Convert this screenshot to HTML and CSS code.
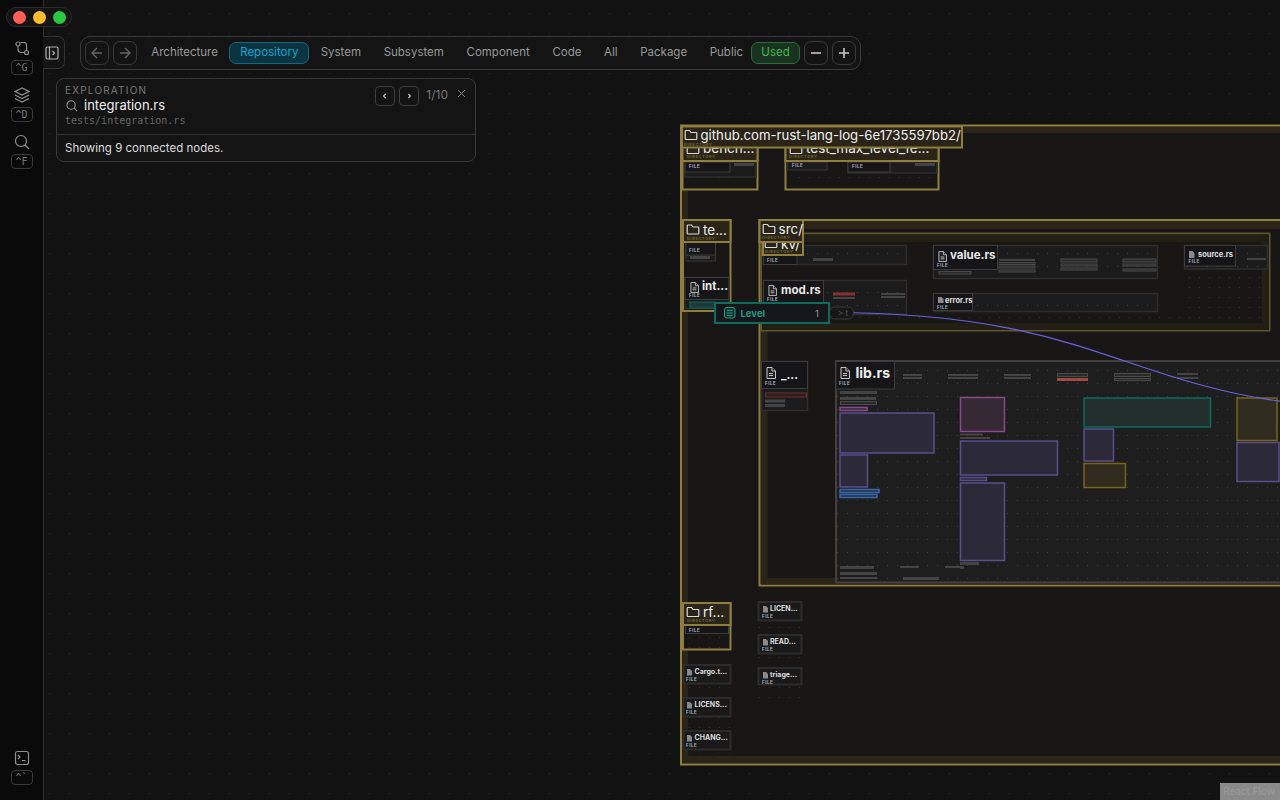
FILE: index.html
```html
<!DOCTYPE html>
<html lang="en">
<head>
  <meta charset="UTF-8">
  <meta name="viewport" content="width=device-width, initial-scale=1.0">
  <title>Code graph - integration.rs</title>
  <link rel="stylesheet" href="styles.css">
</head>
<body>
  <div class="app">
    <svg class="flow" viewBox="0 0 1280 800" width="1280" height="800">
      <defs>
        <pattern id="dots" width="20" height="20" patternUnits="userSpaceOnUse" x="-1" y="3">
          <rect x="10" y="10" width="1" height="1" class="dot"></rect>
        </pattern>
        <pattern id="node-dots" width="10" height="13" patternUnits="userSpaceOnUse" x="2" y="1">
          <rect x="5" y="5" width="1" height="1" class="node-dot"></rect>
        </pattern>
        <pattern id="small-dots" width="10" height="10" patternUnits="userSpaceOnUse" x="4" y="2">
          <rect x="5" y="5" width="1" height="1" class="small-dot"></rect>
        </pattern>
        <symbol id="folder-sym" viewBox="0 0 12 10" overflow="visible">
          <path d="M1 .5h3.500l1.500 2h5a.8.8 0 0 1 .8.8v5.400a.8.8 0 0 1-.8.8h-10a.8.8 0 0 1-.8-.8v-7.400a.8.8 0 0 1 .8-.8z"></path>
        </symbol>
        <symbol id="file-sym" viewBox="0 0 10 12">
          <path d="M1 .5h5l3.500 3.500v7.500h-8.500z"></path>
          <path d="M6 .5v3.500h3.500M3 6.500h4M3 8.500h4"></path>
        </symbol>
      </defs>
      <rect width="1280" height="800" fill="#121212"></rect>
      <rect width="1280" height="800" fill="url(#dots)"></rect>

      <!-- repository group -->
      <rect class="group" x="681" y="125.500" width="700" height="639"></rect>
      <rect class="band" x="682" y="127" width="700" height="6"></rect>
      <rect class="band" x="682" y="127" width="6" height="636"></rect>
      <rect class="band" x="682" y="756" width="700" height="7"></rect>

      <!-- benches -->
      <rect class="group" x="682.500" y="131" width="75" height="58.500"></rect>
      <rect class="file" x="685" y="162" width="71" height="15"></rect>
      <rect class="dotted-s" x="685" y="175" width="71" height="12"></rect>
      <rect class="head-line" x="685" y="162" width="45" height="10"></rect>
      <rect class="bar" x="734" y="163" width="20" height="3"></rect>
      <text class="label-file" x="689" y="167.500">FILE</text>
      <rect class="group" x="785.500" y="131" width="153" height="58.500"></rect>
      <rect class="file" x="787" y="162" width="40" height="8"></rect>
      <rect class="file" x="848" y="162" width="89" height="11"></rect>
      <rect class="dotted-s" x="790" y="175" width="145" height="12"></rect>
      <rect class="head-line" x="848" y="162" width="42" height="10"></rect>
      <rect class="bar" x="915" y="163" width="20" height="3"></rect>
      <text class="label-file" x="792" y="166.500">FILE</text>
      <text class="label-file" x="852" y="167.500">FILE</text>
      <rect class="group-head" x="682.500" y="131" width="75" height="30"></rect>
      <use href="#folder-sym" class="folder" x="687" y="144" width="12" height="10"></use>
      <text class="title-dir" x="703" y="153">bench...</text>
      <text class="label-dir" x="687" y="158">DIRECTORY</text>
      <rect class="group-head" x="785.500" y="131" width="153" height="30"></rect>
      <use href="#folder-sym" class="folder" x="790" y="144" width="12" height="10"></use>
      <text class="title-dir" x="806" y="153">test_max_level_fe...</text>
      <text class="label-dir" x="789" y="158">DIRECTORY</text>

      <!-- repository header sits over the clipped benches -->
      <rect class="group-head" x="682" y="126.500" width="280" height="21"></rect>
      <use href="#folder-sym" class="folder" x="685" y="130" width="12" height="10"></use>
      <text class="title-repo" x="700.500" y="140">github.com-rust-lang-log-6e1735597bb2/</text>
      <text class="label-dir" x="684" y="146">DIRECTORY</text>

      <!-- tests -->
      <rect class="group" x="683" y="220" width="47.500" height="91"></rect>
      <rect class="file" x="686" y="240" width="29.500" height="21"></rect>
      <rect class="head-line" x="686" y="240" width="29.500" height="15"></rect>
      <rect class="bar" x="690" y="256" width="20" height="3"></rect>
      <text class="label-file" x="689" y="251.500">FILE</text>
      <rect class="file" x="685" y="277.500" width="44" height="31"></rect>
      <rect class="head-line" x="685" y="277.500" width="44" height="22"></rect>
      <use href="#file-sym" class="file-icon" x="690" y="282" width="9" height="11"></use>
      <text class="title-file" x="702" y="290">int...</text>
      <text class="label-file" x="689" y="297">FILE</text>
      <rect class="teal-bar" x="690" y="302" width="25" height="6"></rect>
      <rect class="group-head" x="683" y="220" width="47.500" height="22"></rect>
      <use href="#folder-sym" class="folder" x="687" y="224.500" width="12" height="10"></use>
      <text class="title-dir" x="703" y="234.500">te...</text>
      <text class="label-dir" x="687" y="239.500">DIRECTORY</text>

      <!-- src -->
      <rect class="group" x="759.500" y="220" width="620" height="365.500"></rect>
      <rect class="band" x="761" y="221" width="620" height="8"></rect>
      <rect class="band" x="761" y="221" width="6.500" height="363"></rect>
      <rect class="band" x="761" y="578" width="620" height="6.500"></rect>

      <!-- kv -->
      <rect class="group-soft" x="761" y="233.500" width="508.500" height="97"></rect>
      <rect class="band-soft" x="762" y="234.500" width="507" height="7.500"></rect>
      <rect class="band-soft" x="762" y="323" width="507" height="7"></rect>
      <rect class="band-soft" x="1262" y="234.500" width="7" height="95"></rect>
      <rect class="file" x="763.500" y="245.500" width="143" height="19"></rect>
      <rect class="dotted" x="764" y="246" width="142" height="18"></rect>
      <rect class="head-line" x="763.500" y="245.500" width="33.500" height="19"></rect>
      <rect class="bar" x="813" y="258" width="20" height="3"></rect>
      <text class="label-file" x="767" y="261.500">FILE</text>
      <rect class="file" x="763.500" y="280.500" width="143" height="34"></rect>
      <rect class="dotted" x="764" y="281" width="142" height="33"></rect>
      <rect class="head-line" x="763.500" y="280.500" width="60" height="23"></rect>
      <use href="#file-sym" class="file-icon" x="768" y="285" width="9" height="11"></use>
      <text class="title-file" x="781" y="294">mod.rs</text>
      <text class="label-file" x="767" y="301">FILE</text>
      <rect class="bar-red" x="833.500" y="293" width="21" height="2"></rect>
      <rect class="bar" x="881" y="293" width="24" height="2"></rect>
      <rect class="bar" x="881" y="296" width="24" height="2"></rect>
      <rect class="bar" x="833" y="297" width="22" height="2"></rect>

      <rect class="file" x="933.500" y="245.500" width="224" height="33"></rect>
      <rect class="dotted" x="934" y="246" width="223" height="32"></rect>
      <rect class="head-line" x="933.500" y="245.500" width="64" height="24"></rect>
      <use href="#file-sym" class="file-icon" x="938" y="251" width="9" height="11"></use>
      <text class="title-file" x="950" y="259">value.rs</text>
      <text class="label-file" x="937" y="267">FILE</text>
      <rect class="bar-line" x="939" y="271.500" width="32" height="2.500"></rect>
      <rect class="bar" x="999" y="259" width="36" height="2"></rect>
      <rect class="bar-line" x="999" y="262.500" width="36" height="2"></rect>
      <rect class="bar-line" x="999" y="266" width="36" height="2"></rect>
      <rect class="bar-line" x="999" y="270" width="36" height="2"></rect>
      <rect class="bar-line" x="1061" y="259" width="36" height="3"></rect>
      <rect class="bar-line" x="1061" y="264" width="36" height="2"></rect>
      <rect class="bar-line" x="1061" y="268" width="36" height="2"></rect>
      <rect class="bar-line" x="1123" y="259" width="33" height="3"></rect>
      <rect class="bar-line" x="1123" y="264" width="33" height="2"></rect>
      <rect class="bar-line" x="1123" y="269" width="33" height="2"></rect>

      <rect class="file" x="933.500" y="293.500" width="224" height="18"></rect>
      <rect class="dotted" x="934" y="294" width="223" height="17"></rect>
      <rect class="head-line" x="933.500" y="293.500" width="39" height="17"></rect>
      <path class="file-solid" d="M938 297h3.500l2 2v4h-5.500z"></path>
      <text class="title-file-s" x="945" y="303">error.rs</text>
      <text class="label-file" x="937" y="309">FILE</text>

      <rect class="file" x="1184.500" y="245.500" width="83" height="23.500"></rect>
      <rect class="dotted" x="1185" y="246" width="82" height="23"></rect>
      <rect class="head-line" x="1184.500" y="245.500" width="51" height="20.500"></rect>
      <path class="file-solid" d="M1189 251h3.500l2 2v5h-5.500z"></path>
      <text class="title-file-s" x="1198" y="256.500">source.rs</text>
      <text class="label-file" x="1188.500" y="262.500">FILE</text>
      <rect class="bar" x="1247" y="258" width="19" height="2"></rect>
      <rect class="small-dotted" x="1185" y="270" width="78" height="50"></rect>
      <rect class="small-dotted" x="764" y="315" width="498" height="8"></rect>

      <rect class="group-head" x="763" y="235" width="40" height="20"></rect>
      <use href="#folder-sym" class="folder" x="765" y="238" width="12" height="10"></use>
      <text class="title-dir" x="781" y="248.500">kv/</text>
      <text class="label-dir" x="765" y="252.500">DIRECTORY</text>

      <rect class="group-head" x="759.500" y="220" width="43.500" height="22"></rect>
      <use href="#folder-sym" class="folder" x="763" y="224" width="12" height="10"></use>
      <text class="title-dir" x="778.500" y="234">src/</text>
      <text class="label-dir" x="762" y="239">DIRECTORY</text>

      <!-- underscore file -->
      <rect class="file" x="761.500" y="361.500" width="46" height="49"></rect>
      <rect class="head-line" x="761.500" y="361.500" width="46" height="27"></rect>
      <use href="#file-sym" class="file-icon" x="766" y="367" width="10" height="12"></use>
      <text class="title-file" x="781" y="379">_...</text>
      <text class="label-file" x="765" y="385">FILE</text>
      <rect class="bar-red-line" x="765.500" y="393" width="41" height="4"></rect>
      <rect class="bar" x="765" y="399.500" width="20" height="3"></rect>
      <rect class="bar" x="765" y="404" width="20" height="3"></rect>

      <!-- lib.rs -->
      <rect class="lib" x="836" y="361" width="545" height="221.500"></rect>
      <rect class="lib-dots" x="837" y="362" width="443" height="220"></rect>
      <rect class="head-line" x="836" y="361.500" width="58.500" height="27.500"></rect>
      <use href="#file-sym" class="file-icon" x="840" y="367" width="10" height="12"></use>
      <text class="title-lib" x="855.500" y="378">lib.rs</text>
      <text class="label-file" x="839" y="385">FILE</text>

      <rect class="bar" x="903" y="374" width="19" height="2"></rect>
      <rect class="bar" x="903" y="377" width="19" height="2"></rect>
      <rect class="bar" x="948" y="374" width="30" height="2"></rect>
      <rect class="bar" x="948" y="377" width="30" height="2"></rect>
      <rect class="bar" x="1004" y="374" width="27" height="2"></rect>
      <rect class="bar" x="1004" y="377" width="27" height="2"></rect>
      <rect class="bar-line" x="1057.500" y="373.500" width="30" height="3"></rect>
      <rect class="bar-red-solid" x="1057" y="378" width="31" height="3"></rect>
      <rect class="bar-line" x="1114.500" y="373.500" width="36" height="3"></rect>
      <rect class="bar-line" x="1114.500" y="378.500" width="36" height="2"></rect>
      <rect class="bar" x="1177" y="373" width="21" height="2"></rect>
      <rect class="bar" x="1177" y="377" width="21" height="2"></rect>

      <rect class="bar" x="840" y="391" width="37" height="3"></rect>
      <rect class="bar" x="840" y="397" width="36" height="3"></rect>
      <rect class="bar-line" x="840.500" y="401.500" width="36" height="3"></rect>
      <rect class="box-magenta" x="840" y="407.500" width="27" height="3"></rect>
      <rect class="box-purple" x="840" y="413" width="94" height="40"></rect>
      <rect class="box-purple" x="840" y="455" width="27.500" height="32"></rect>
      <rect class="box-blue" x="840" y="489.500" width="39" height="3"></rect>
      <rect class="box-blue" x="840" y="494.500" width="37" height="3"></rect>

      <rect class="box-magenta" x="960.500" y="397.500" width="44" height="34"></rect>
      <rect class="bar" x="960" y="433.500" width="23" height="2"></rect>
      <rect class="bar" x="960" y="437" width="30" height="2"></rect>
      <rect class="box-purple" x="960.500" y="441" width="97" height="34"></rect>
      <rect class="box-purple" x="960.500" y="477.500" width="26" height="3"></rect>
      <rect class="box-purple" x="960.500" y="483" width="44" height="77.500"></rect>
      <rect class="bar" x="960" y="562" width="19" height="3"></rect>
      <rect class="bar" x="960" y="567" width="4" height="2"></rect>

      <rect class="box-teal" x="1084" y="398" width="126.500" height="29"></rect>
      <rect class="box-purple" x="1084" y="429" width="29.500" height="32"></rect>
      <rect class="box-olive" x="1084" y="463.500" width="41.500" height="24"></rect>
      <rect class="box-olive" x="1237" y="398" width="40" height="42.500"></rect>
      <rect class="box-purple" x="1237" y="442.500" width="42" height="39"></rect>

      <rect class="bar" x="840" y="566" width="34" height="3"></rect>
      <rect class="bar" x="840" y="572" width="37" height="3"></rect>
      <rect class="bar" x="840" y="577" width="37" height="2"></rect>
      <rect class="bar" x="900" y="566" width="19" height="2"></rect>
      <rect class="bar" x="945" y="566" width="19" height="2"></rect>
      <rect class="bar" x="903" y="577" width="36" height="3"></rect>

      <!-- rfcs and loose files -->
      <rect class="group" x="683" y="603" width="47.500" height="46.500"></rect>
      <rect class="small-dotted" x="686" y="632" width="42" height="16"></rect>
      <rect class="head-line" x="685.500" y="625.500" width="43" height="8"></rect>
      <text class="label-file" x="689" y="631.500">FILE</text>
      <rect class="group-head" x="683" y="603" width="47.500" height="22"></rect>
      <use href="#folder-sym" class="folder" x="687" y="607" width="12" height="10"></use>
      <text class="title-dir" x="703" y="616.500">rf...</text>
      <text class="label-dir" x="687" y="622">DIRECTORY</text>

      <rect class="file-dark" x="683.500" y="665" width="47" height="18.500"></rect>
      <path class="file-solid" d="M687 669h3l2 2v4.500h-5z"></path>
      <text class="title-xs" x="694.500" y="674">Cargo.t...</text>
      <text class="label-file" x="686" y="681">FILE</text>
      <rect class="small-dotted" x="684" y="684" width="46" height="13"></rect>
      <rect class="file-dark" x="683.500" y="698" width="47" height="18.500"></rect>
      <path class="file-solid" d="M687 702h3l2 2v4.500h-5z"></path>
      <text class="title-xs" x="694.500" y="707">LICENS...</text>
      <text class="label-file" x="686" y="714">FILE</text>
      <rect class="small-dotted" x="684" y="717" width="46" height="13"></rect>
      <rect class="file-dark" x="683.500" y="731" width="47" height="18.500"></rect>
      <path class="file-solid" d="M687 735h3l2 2v4.500h-5z"></path>
      <text class="title-xs" x="694.500" y="740">CHANG...</text>
      <text class="label-file" x="686" y="747">FILE</text>
      <rect class="small-dotted" x="684" y="750" width="46" height="14"></rect>

      <rect class="file-dark" x="758.500" y="602" width="43" height="18.500"></rect>
      <path class="file-solid" d="M763 606h3l2 2v4.500h-5z"></path>
      <text class="title-xs" x="770" y="611">LICEN...</text>
      <text class="label-file" x="762" y="618">FILE</text>
      <rect class="small-dotted" x="759" y="621" width="42" height="13"></rect>
      <rect class="file-dark" x="758.500" y="635" width="43" height="18.500"></rect>
      <path class="file-solid" d="M763 639h3l2 2v4.500h-5z"></path>
      <text class="title-xs" x="770" y="644">READ...</text>
      <text class="label-file" x="762" y="651">FILE</text>
      <rect class="small-dotted" x="759" y="654" width="42" height="13"></rect>
      <rect class="file-dark" x="758.500" y="668" width="43" height="16.500"></rect>
      <path class="file-solid" d="M763 672h3l2 2v4.500h-5z"></path>
      <text class="title-xs" x="770" y="677">triage...</text>
      <text class="label-file" x="762" y="684">FILE</text>
      <rect class="small-dotted" x="759" y="686" width="42" height="14"></rect>

      <!-- highlighted symbol and its edge -->
      <path class="edge" d="M829 312.500 C 1127 312.500, 1127 409, 1401 409"></path>
      <rect class="handle" x="829.500" y="307" width="24" height="12" rx="5"></rect>
      <text class="handle-text" x="838" y="316">&gt; t</text>
      <rect class="symbol" x="715" y="303" width="114" height="20"></rect>
      <rect class="symbol-icon" x="724.500" y="307.500" width="10.500" height="10.500" rx="2"></rect>
      <path class="symbol-lines" d="M727 310.500h5.500M727 313h5.500M727 315.500h5.500"></path>
      <text class="symbol-name" x="740.500" y="316.500">Level</text>
      <text class="symbol-count" x="815" y="316.500">1</text>
    </svg>

    <aside class="sidebar">
      <div class="side-group">
        <svg class="side-icon" viewBox="0 0 16 16">
          <circle cx="4" cy="4" r="2"></circle>
          <circle cx="12.500" cy="12.500" r="2"></circle>
          <path d="M4 6v3.500a3 3 0 0 0 3 3h3.500M6.500 2.500h3.500a2.500 2.500 0 0 1 2.500 2.500v5.500"></path>
        </svg>
        <kbd class="key">^G</kbd>
      </div>
      <div class="side-group">
        <svg class="side-icon" viewBox="0 0 16 16">
          <path d="M8 1 1 4.500 8 8l7-3.500zM1 8l7 3.500L15 8M1 11.500 8 15l7-3.500"></path>
        </svg>
        <kbd class="key">^D</kbd>
      </div>
      <div class="side-group">
        <svg class="side-icon" viewBox="0 0 16 16">
          <circle cx="7" cy="7" r="5.500"></circle>
          <path d="m11 11 4 4"></path>
        </svg>
        <kbd class="key">^F</kbd>
      </div>
      <div class="side-group side-bottom">
        <svg class="side-icon" viewBox="0 0 16 16">
          <rect x="1.500" y="1.500" width="13" height="13" rx="2"></rect>
          <path d="m4 5 2 2-2 2M8 10.500h3.500"></path>
        </svg>
        <kbd class="key">^`</kbd>
      </div>
    </aside>

    <div class="lights">
      <span class="light red"></span>
      <span class="light yellow"></span>
      <span class="light green"></span>
    </div>

    <button class="panel-toggle">
      <svg viewBox="0 0 14 14">
        <rect x="1" y="1" width="12" height="12" rx="1.500"></rect>
        <path d="M4.500 1v12M7.500 5l2 2-2 2"></path>
      </svg>
    </button>

    <nav class="toolbar">
      <button class="nav-btn">
        <svg viewBox="0 0 14 14"><path d="M12 7H2M7 2 2 7l5 5"></path></svg>
      </button>
      <button class="nav-btn">
        <svg viewBox="0 0 14 14"><path d="M2 7h10M7 2l5 5-5 5"></path></svg>
      </button>
      <div class="tabs">
        <a class="tab">Architecture</a>
        <a class="tab active">Repository</a>
        <a class="tab">System</a>
        <a class="tab">Subsystem</a>
        <a class="tab">Component</a>
        <a class="tab">Code</a>
        <a class="tab">All</a>
        <a class="tab">Package</a>
        <a class="tab">Public</a>
        <a class="tab used">Used</a>
      </div>
      <button class="zoom-btn">
        <svg viewBox="0 0 12 12"><path d="M1 6h10"></path></svg>
      </button>
      <button class="zoom-btn">
        <svg viewBox="0 0 12 12"><path d="M1 6h10M6 1v10"></path></svg>
      </button>
    </nav>

    <section class="exploration">
      <div class="exp-head">
        <div class="exp-info">
          <div class="exp-title">EXPLORATION</div>
          <div class="exp-name">
            <svg viewBox="0 0 14 14">
              <circle cx="6.500" cy="6.500" r="4.500"></circle>
              <path d="m10 10 3 3"></path>
            </svg>
            integration.rs
          </div>
          <div class="exp-path">tests/integration.rs</div>
        </div>
        <div class="exp-pager">
          <button class="page-btn">
            <svg viewBox="0 0 6 6"><path d="M3.500 1.500 2 3l1.500 1.500"></path></svg>
          </button>
          <button class="page-btn">
            <svg viewBox="0 0 6 6"><path d="M2.500 1.500 4 3 2.500 4.500"></path></svg>
          </button>
          <span class="page-count">1/10</span>
          <svg class="page-close" viewBox="0 0 8 8"><path d="m1 1 6 6M7 1 1 7"></path></svg>
        </div>
      </div>
      <div class="exp-foot">Showing 9 connected nodes.</div>
    </section>

    <div class="attribution">React Flow</div>
  </div>
</body>
</html>
```

FILE: styles.css
```css
* {
  box-sizing: border-box;
}

body {
  margin: 0;
  background: #121212;
  font-family: Inter, "Noto Sans", sans-serif;
  color: #ddd;
  overflow: hidden;
}

.app {
  position: relative;
  width: 1280px;
  height: 800px;
  overflow: hidden;
}

.flow {
  position: absolute;
  inset: 0;
  display: block;
}

/* sidebar */
.sidebar {
  position: relative;
  width: 44px;
  height: 800px;
  background: #0a0a0a;
  border-right: 1px solid #2e2e2e;
  display: flex;
  flex-direction: column;
  align-items: center;
  padding-top: 40px;
  gap: 12px;
}

.side-group {
  display: flex;
  flex-direction: column;
  align-items: center;
  gap: 4px;
}

.side-bottom {
  margin-top: auto;
  margin-bottom: 15px;
}

.side-icon {
  width: 16px;
  height: 16px;
  fill: none;
  stroke: #8f8f8f;
  stroke-width: 1.200;
}

.key {
  width: 22px;
  height: 15px;
  border: 1px solid #3a3a3a;
  border-radius: 4px;
  font-family: "DejaVu Sans Mono", monospace;
  font-size: 10px;
  line-height: 13px;
  text-align: center;
  color: #777;
}

/* window controls */
.lights {
  position: absolute;
  left: 6px;
  top: 7px;
  width: 66px;
  height: 20px;
  padding-left: 1px;
  background: #141414;
  border: 1px solid #2c2c2c;
  border-radius: 10px;
  display: flex;
  align-items: center;
  justify-content: center;
  gap: 7px;
}

.light {
  width: 13px;
  height: 13px;
  border-radius: 50%;
}

.red { background: #ff5f57; }
.yellow { background: #febc2e; }
.green { background: #28c840; }

.panel-toggle {
  position: absolute;
  left: 43px;
  top: 36px;
  width: 22px;
  height: 33px;
  padding: 0 0 0 2px;
  background: #141414;
  border: 1px solid #333;
  border-left: none;
  border-radius: 0 7px 7px 0;
  display: flex;
  align-items: center;
}

.panel-toggle svg {
  width: 14px;
  height: 14px;
  fill: none;
  stroke: #b0b0b0;
  stroke-width: 1.200;
}

/* toolbar */
.toolbar {
  position: absolute;
  left: 80px;
  top: 36px;
  width: 781px;
  height: 34px;
  background: #141414;
  border: 1px solid #3a3a3a;
  border-radius: 10px;
  display: flex;
  align-items: center;
  padding-left: 4px;
  gap: 4px;
}

.nav-btn,
.zoom-btn {
  flex: none;
  width: 24px;
  height: 24px;
  padding: 0;
  background: transparent;
  border: 1px solid #3a3a3a;
  border-radius: 7px;
  display: flex;
  align-items: center;
  justify-content: center;
}

.nav-btn svg {
  width: 14px;
  height: 14px;
  fill: none;
  stroke: #666;
  stroke-width: 1.400;
}

.zoom-btn svg {
  width: 12px;
  height: 12px;
  fill: none;
  stroke: #c8c8c8;
  stroke-width: 1.600;
}

.tabs {
  display: flex;
  align-items: center;
  flex: none;
  margin-left: -1px;
}

.tab {
  height: 22px;
  padding: 0 10.300px;
  border: 1px solid transparent;
  border-radius: 7px;
  font-size: 11.500px;
  line-height: 19px;
  color: #9a9a9a;
  white-space: nowrap;
}

.tab.active {
  color: #0ea5d0;
  background: #0c3440;
  border-color: #0f6a80;
  padding: 0 10px;
}

.tab.used {
  color: #3fb950;
  background: #1a3320;
  border-color: #2c6b38;
  margin-left: -3px;
  padding: 0 9px;
}

/* exploration panel */
.exploration {
  position: absolute;
  left: 56px;
  top: 78px;
  width: 420px;
  height: 84px;
  background: #141414;
  border: 1px solid #3a3a3a;
  border-radius: 8px;
}

.exp-head {
  height: 56px;
  padding: 6px 8px;
  border-bottom: 1px solid #333;
  display: flex;
  justify-content: space-between;
}

.exp-title {
  font-size: 10px;
  line-height: 11px;
  letter-spacing: 1.200px;
  color: #777;
}

.exp-name {
  display: flex;
  align-items: center;
  gap: 6px;
  font-size: 13px;
  line-height: 18px;
  color: #eee;
}

.exp-name svg {
  width: 13px;
  height: 13px;
  fill: none;
  stroke: #999;
  stroke-width: 1.100;
}

.exp-path {
  margin-top: 1px;
  font-family: "DejaVu Sans Mono", monospace;
  font-size: 10px;
  line-height: 12px;
  color: #666;
}

.exp-pager {
  display: flex;
  align-items: flex-start;
  gap: 4px;
  padding-top: 1px;
}

.page-btn {
  width: 20px;
  height: 20px;
  padding: 0;
  background: transparent;
  border: 1px solid #3f3f3f;
  border-radius: 4px;
  display: flex;
  align-items: center;
  justify-content: center;
}

.page-btn svg {
  width: 8px;
  height: 8px;
  fill: none;
  stroke: #bbb;
  stroke-width: 1;
}

.page-count {
  margin: 1px 0 0 3px;
  font-size: 12px;
  line-height: 16px;
  color: #777;
}

.page-close {
  width: 9px;
  height: 9px;
  margin: 3px 1px 0 5px;
  fill: none;
  stroke: #999;
  stroke-width: 0.800;
}

.exp-foot {
  padding: 6px 8px;
  font-size: 11.500px;
  line-height: 14px;
  color: #ddd;
}

/* graph */
.dot { fill: #2c2c2c; }
.node-dot { fill: #404040; }
.small-dot { fill: #333; }

.group { fill: #181715; stroke: #8f7e3e; stroke-width: 2; }
.group-soft { fill: #181715; stroke: #5f5430; stroke-width: 2; }
.band { fill: #2a2518; }
.band-soft { fill: #221f15; }
.group-head { fill: #2a2518; stroke: #8f7e3e; stroke-width: 2; }
.folder { fill: none; stroke: #dcdcdc; stroke-width: 1.200; }

.title-repo { font-size: 13.200px; fill: #f2f2f2; }
.title-dir { font-size: 13.500px; fill: #eee; }
.title-file { font-size: 11.500px; font-weight: 700; fill: #e8e8e8; }
.title-file-s { font-size: 7.500px; font-weight: 700; fill: #e0e0e0; }
.title-lib { font-size: 14px; font-weight: 700; fill: #eee; }
.title-xs { font-size: 7px; font-weight: 700; fill: #ddd; }

.label-dir { font-size: 4px; font-weight: 700; letter-spacing: 0.600px; fill: #6e6230; }
.label-file { font-size: 4.500px; font-weight: 700; letter-spacing: 0.500px; fill: #a8b0c0; }

.file { fill: #1c1c1c; stroke: #2e2e2e; stroke-width: 1.500; }
.file-dark { fill: #1a1a1a; stroke: #2c2c2c; stroke-width: 2; }
.head-line { fill: #161618; stroke: #3c3c3c; stroke-width: 1; }
.dotted { fill: url(#node-dots); }
.dotted-s,
.small-dotted { fill: url(#small-dots); }
.lib { fill: #1e1e1e; stroke: #444040; stroke-width: 2; }
.lib-dots { fill: url(#node-dots); }

.file-icon { fill: #222; stroke: #c4c4c4; stroke-width: 1; }
.file-solid { fill: #8a8a8a; }

.bar { fill: #444; }
.bar-line { fill: #2a2a2a; stroke: #4a4a4a; stroke-width: 1; }
.bar-red { fill: #7a2e2e; stroke: #8c3434; stroke-width: 1; }
.bar-red-line { fill: #2a1e1e; stroke: #6e2c2c; stroke-width: 1; }
.bar-red-solid { fill: #a04a44; }
.teal-bar { fill: #1f3a3a; stroke: #0f6b5c; stroke-width: 1; }

.box-purple { fill: #2c2a38; stroke: #5a4f8c; stroke-width: 1.500; }
.box-magenta { fill: #352a34; stroke: #8a4a8c; stroke-width: 1.500; }
.box-blue { fill: #22304a; stroke: #3a68a8; stroke-width: 1.500; }
.box-teal { fill: #222f2c; stroke: #0f6b5c; stroke-width: 1.500; }
.box-olive { fill: #302d20; stroke: #75661a; stroke-width: 1.500; }

.edge { fill: none; stroke: #6a62e0; stroke-width: 1.200; }
.handle { fill: #181818; stroke: #3a3a3a; stroke-width: 1; }
.handle-text { font-size: 8px; fill: #555; }
.symbol { fill: #15171a; stroke: #0f6b5c; stroke-width: 2; }
.symbol-icon { fill: #17332f; stroke: #1f9c84; stroke-width: 1; }
.symbol-lines { fill: none; stroke: #1f9c84; stroke-width: 1; }
.symbol-name { font-size: 9.500px; font-weight: 700; fill: #1f9c84; }
.symbol-count { font-size: 9.500px; fill: #999; }

.attribution {
  position: absolute;
  right: 0;
  bottom: 0;
  width: 60px;
  height: 17px;
  background: #8a8a8a;
  padding-left: 3px;
  font-size: 10px;
  line-height: 17px;
  color: #9c9c9c;
  white-space: nowrap;
}
```
